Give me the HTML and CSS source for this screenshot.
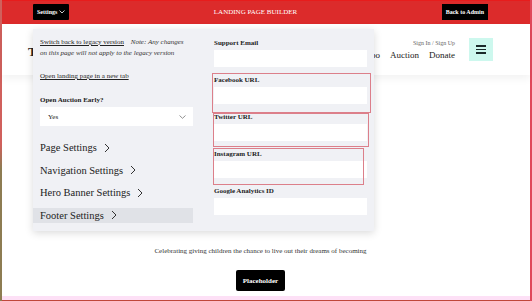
FILE: index.html
```html
<!DOCTYPE html>
<html lang="en">
<head>
    <meta charset="UTF-8">
    <meta name="viewport" content="width=device-width, initial-scale=1.0">
    <title>Landing Page Builder</title>
    <link rel="stylesheet" href="styles.css">
</head>
<body>

<div class="frame">
    <div class="topbar">
        <button class="btn-dark settings-btn">Settings
            <svg width="6" height="4" viewBox="0 0 6 4"><polyline points="0.5,0.5 3,3 5.5,0.5" fill="none" stroke="#fff" stroke-width="0.8"/></svg>
        </button>
        <span class="topbar-title">LANDING PAGE BUILDER</span>
        <button class="btn-dark">Back to Admin</button>
    </div>

    <header class="site-header">
        <div class="site-logo">T</div>
        <div class="site-nav">
            <span class="sign-in">Sign In / Sign Up</span>
            <nav>
                <a href="#">Expo</a>
                <a href="#">Auction</a>
                <a href="#">Donate</a>
            </nav>
        </div>
        <button class="menu-btn"><span></span><span></span><span></span></button>
    </header>

    <main class="hero">
        <p>Celebrating giving children the chance to live out their dreams of becoming</p>
        <a href="#" class="btn-dark placeholder-btn">Placeholder</a>
    </main>

    <div class="page-foot"></div>

    <div class="settings-panel">
        <div class="panel-col">
            <p class="legacy-note"><a href="#">Switch back to legacy version</a> <i>Note: Any changes on this page will not apply to the legacy version</i></p>
            <a href="#" class="open-link">Open landing page in a new tab</a>
            <label class="field-label early-label">Open Auction Early?</label>
            <div class="select-box">
                <span>Yes</span>
                <svg width="7" height="4" viewBox="0 0 7 4"><polyline points="0.5,0.5 3.5,3.3 6.5,0.5" fill="none" stroke="#777" stroke-width="0.8"/></svg>
            </div>
            <ul class="section-list">
                <li>Page Settings <svg width="6" height="10" viewBox="0 0 6 10"><polyline points="1,1 5,5 1,9" fill="none" stroke="#333" stroke-width="1"/></svg></li>
                <li>Navigation Settings <svg width="6" height="10" viewBox="0 0 6 10"><polyline points="1,1 5,5 1,9" fill="none" stroke="#333" stroke-width="1"/></svg></li>
                <li>Hero Banner Settings <svg width="6" height="10" viewBox="0 0 6 10"><polyline points="1,1 5,5 1,9" fill="none" stroke="#333" stroke-width="1"/></svg></li>
                <li class="active">Footer Settings <svg width="6" height="10" viewBox="0 0 6 10"><polyline points="1,1 5,5 1,9" fill="none" stroke="#333" stroke-width="1"/></svg></li>
            </ul>
        </div>
        <div class="panel-col">
            <div class="field">
                <label class="field-label">Support Email</label>
                <input type="text">
            </div>
            <div class="field marked mark-facebook">
                <label class="field-label">Facebook URL</label>
                <input type="text">
            </div>
            <div class="field marked mark-twitter">
                <label class="field-label">Twitter URL</label>
                <input type="text">
            </div>
            <div class="field marked mark-instagram">
                <label class="field-label">Instagram URL</label>
                <input type="text">
            </div>
            <div class="field">
                <label class="field-label">Google Analytics ID</label>
                <input type="text">
            </div>
        </div>
    </div>
</div>

</body>
</html>
```

FILE: styles.css
```css
body {
    margin: 0;
    font-family: 'Liberation Serif', 'Times New Roman', serif;
    color: #222;
    height: 301px;
    overflow: hidden;
    /* left edge of the frame fades from red to olive */
    background: linear-gradient(#d0605c 0, #d0605c 48%, #8d7c52 56%, #8d7c52 100%);
}
.frame {
    position: relative;
    margin-left: 2px;
    height: 301px;
    background: #fff;
    border-right: 2px solid #e0485a;
    display: flex;
    flex-direction: column;
}
.topbar {
    height: 24px;
    flex-shrink: 0;
    background-color: #dc2b2b;
    border-top: 1px solid #e81c1c;
    box-sizing: border-box;
    display: flex;
    align-items: center;
    justify-content: space-between;
    padding: 0 42px 1px 31px;
}
.topbar-title {
    color: #fff;
    font-size: 7px;
}
.btn-dark {
    background: #000;
    color: #fff;
    border: none;
    font-family: inherit;
    font-weight: bold;
    font-size: 6px;
    height: 16px;
    padding: 0 4px;
    display: flex;
    align-items: center;
    gap: 2px;
    text-decoration: none;
    cursor: pointer;
}
.settings-btn {
    border-radius: 1px;
}
.site-header {
    position: relative;
    z-index: 1;
    height: 51px;
    flex-shrink: 0;
    box-sizing: border-box;
    display: flex;
    align-items: center;
    padding: 0 37px 0 26px;
    background: #fff;
    box-shadow: 0 4px 8px rgba(0, 0, 0, 0.05);
}
.site-logo {
    font-size: 13px;
    font-weight: bold;
    margin-top: 4px;
}
.site-nav {
    margin-left: auto;
    display: flex;
    flex-direction: column;
    align-items: flex-end;
    margin-right: 14px;
}
.sign-in {
    font-size: 6px;
    line-height: 8px;
    color: #666;
    margin-bottom: 3px;
}
.site-nav nav {
    display: flex;
    gap: 10px;
}
.site-nav a {
    font-size: 9px;
    line-height: 11px;
    color: #222;
    text-decoration: none;
}
.menu-btn {
    width: 24px;
    height: 23px;
    background: #cdf8ee;
    border: none;
    display: flex;
    flex-direction: column;
    align-items: center;
    justify-content: center;
    gap: 2px;
    padding: 0;
}
.menu-btn span {
    display: block;
    width: 10px;
    height: 1.5px;
    background: #1a2a2a;
}
.hero {
    height: 221px;
    box-sizing: border-box;
    padding: 171px 11px 0 0;
    display: flex;
    flex-direction: column;
    align-items: center;
}
.hero p {
    margin: 0;
    font-size: 7px;
    line-height: 10px;
    color: #333;
}
.placeholder-btn {
    margin-top: 14px;
    height: 21px;
    padding: 0 7px;
    font-size: 7px;
    border-radius: 2px;
}
.page-foot {
    height: 4px;
    background: #fde0f6;
    border-bottom: 1px solid #c0473a;
}

/* settings dropdown */
.settings-panel {
    position: absolute;
    top: 29px;
    left: 31px;
    width: 341px;
    box-sizing: border-box;
    padding: 8px 8px 7px 7px;
    background: #f0f1f5;
    box-shadow: 0 2px 8px rgba(0, 0, 0, 0.15);
    display: grid;
    grid-template-columns: 153px 153px;
    column-gap: 20px;
    z-index: 2;
}
.panel-col {
    display: flex;
    flex-direction: column;
}
.legacy-note {
    margin: 0;
    padding-right: 5px;
    font-size: 7px;
    line-height: 11px;
    color: #222;
}
.legacy-note a,
.open-link {
    color: #222;
    text-decoration: underline;
}
.legacy-note i {
    margin-left: 5px;
    color: #333;
}
.open-link {
    font-size: 7px;
    line-height: 11px;
    margin-top: 12px;
}
.field-label {
    display: block;
    font-size: 7px;
    line-height: 8px;
    font-weight: bold;
    color: #222;
}
.early-label {
    margin-top: 14px;
}
.select-box {
    margin-top: 3px;
    height: 19px;
    background: #fff;
    display: flex;
    align-items: center;
    justify-content: space-between;
    padding: 0 7px 0 8px;
    font-size: 7px;
}
.section-list {
    list-style: none;
    margin: 14px 0 0 0;
    padding: 0;
    display: flex;
    flex-direction: column;
    gap: 7.5px;
}
.section-list li {
    height: 15px;
    line-height: 15px;
    font-size: 10.5px;
    color: #222;
    display: flex;
    align-items: center;
    gap: 7px;
    margin-left: -7px;
    padding-left: 7px;
}
.section-list li.active {
    background: #e0e2e7;
}
.field {
    position: relative;
    padding-bottom: 9px;
}
.field:first-child {
    margin-top: 2px;
}
.field .field-label,
.field input {
    margin-left: 1px;
}
.field input {
    display: block;
    margin-top: 3px;
    width: 153px;
    height: 17px;
    box-sizing: border-box;
    border: none;
    background: #fff;
    padding: 0 6px;
}
/* review marks drawn over the social fields */
.field.marked::after {
    content: "";
    position: absolute;
    border: 1px solid #dc7f8a;
    pointer-events: none;
}
.mark-facebook::after {
    top: -3px;
    left: -1px;
    right: -5px;
    bottom: 0;
}
.mark-twitter::after {
    top: 0;
    left: 0;
    right: -3px;
    bottom: 3px;
}
.mark-instagram::after {
    top: -2px;
    left: 0;
    right: 2px;
    bottom: 2px;
    border-color: #c9939a;
}
```
